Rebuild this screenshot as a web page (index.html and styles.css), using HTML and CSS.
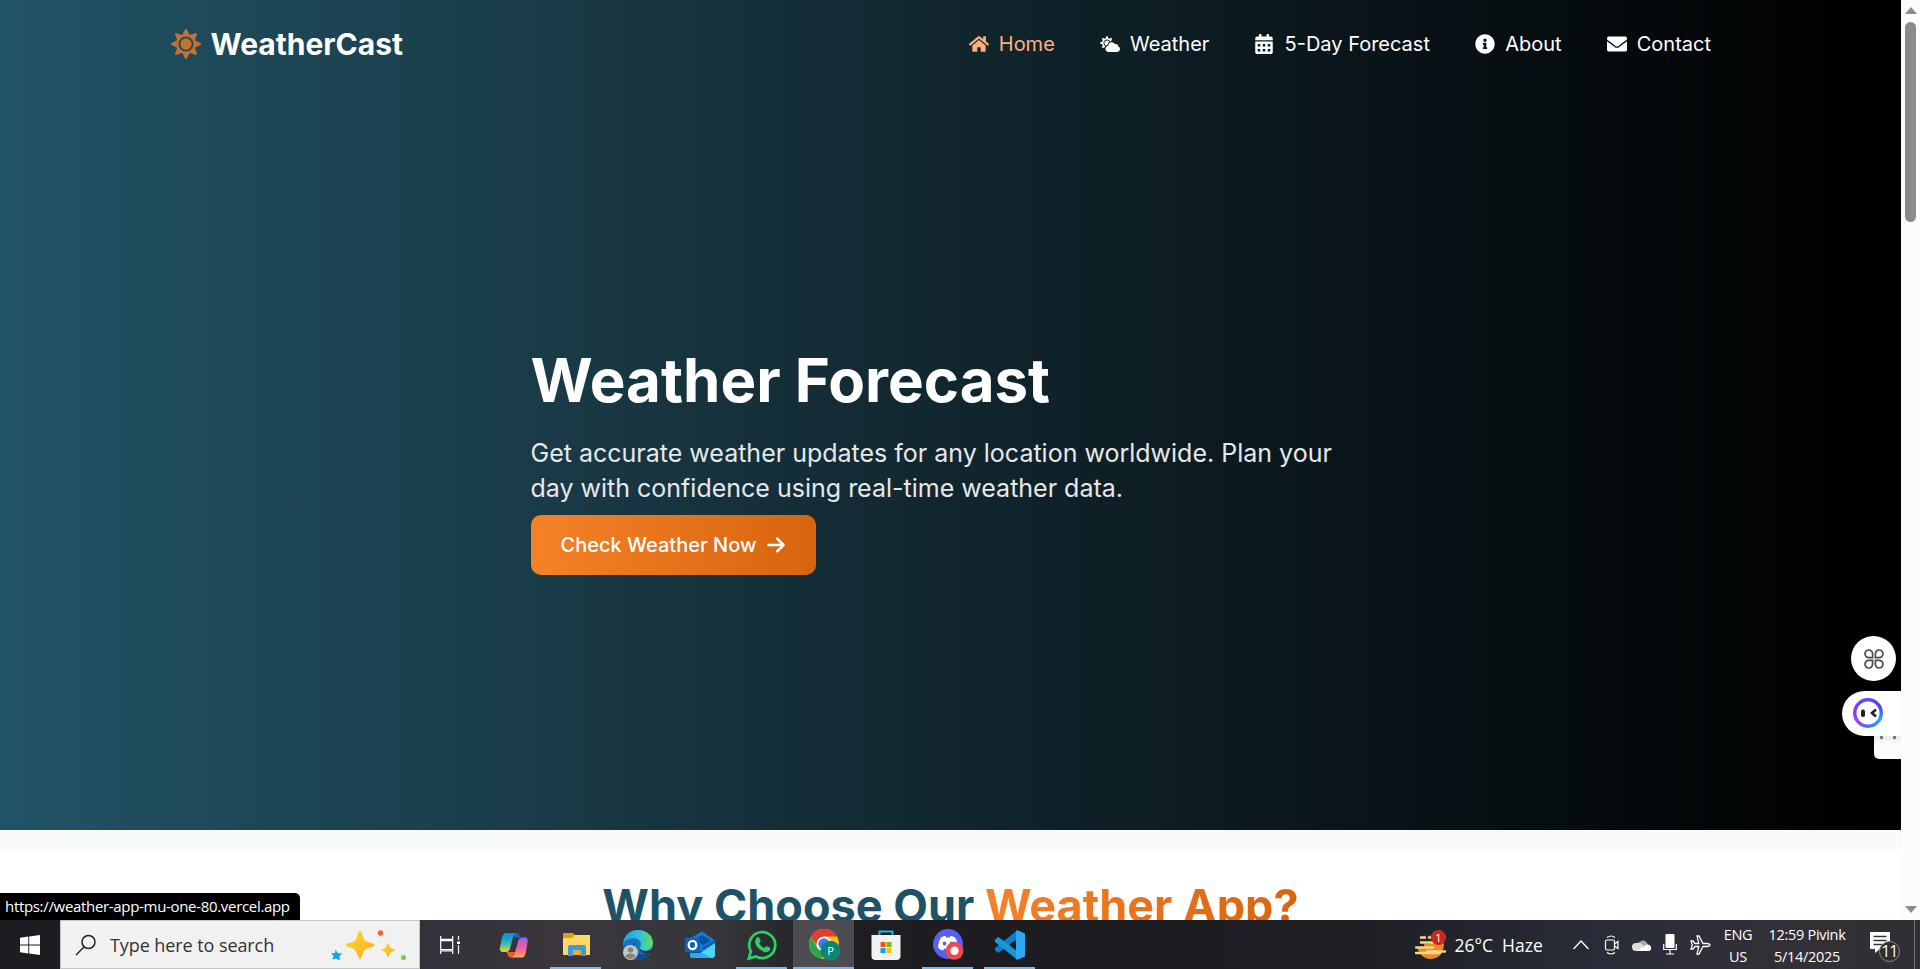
FILE: index.html
```html
<!DOCTYPE html>
<html lang="en">
<head>
<meta charset="utf-8">
<title>WeatherCast</title>
<link rel="stylesheet" href="styles.css">
</head>
<body>
<div class="desktop">
  <div class="browser">
    <div class="page">
      <section class="hero">
        <header class="navbar">
          <div class="logo">
            <svg class="logo-icon" viewBox="0 0 512 512"><path d="M256 160c-52.9 0-96 43.1-96 96s43.1 96 96 96 96-43.1 96-96-43.1-96-96-96zm246.4 80.5l-94.7-47.3 33.5-100.4c4.5-13.6-8.4-26.5-21.9-21.9l-100.4 33.5-47.4-94.8c-6.4-12.8-24.6-12.8-31 0l-47.3 94.7L92.7 70.8c-13.6-4.5-26.5 8.4-21.9 21.9l33.5 100.4-94.7 47.4c-12.8 6.4-12.8 24.6 0 31l94.7 47.3-33.5 100.5c-4.5 13.6 8.4 26.5 21.9 21.9l100.4-33.5 47.3 94.7c6.4 12.8 24.6 12.8 31 0l47.3-94.7 100.4 33.5c13.6 4.5 26.5-8.4 21.9-21.9l-33.5-100.4 94.7-47.3c13-6.5 13-24.7.2-31.1zm-155.9 106c-49.9 49.9-131.1 49.9-181 0-49.9-49.9-49.9-131.1 0-181 49.9-49.9 131.1-49.9 181 0 49.9 49.9 49.9 131.1 0 181z"/></svg>
            <span>WeatherCast</span>
          </div>
          <nav class="nav">
            <a class="nav-link active"><svg class="nav-icon" viewBox="0 0 576 512"><path d="M280.37 148.26L96 300.11V464a16 16 0 0 0 16 16l112.06-.29a16 16 0 0 0 15.92-16V368a16 16 0 0 1 16-16h64a16 16 0 0 1 16 16v95.64a16 16 0 0 0 16 16.05L464 480a16 16 0 0 0 16-16V300L295.67 148.26a12.19 12.19 0 0 0-15.3 0zM571.6 251.47L488 182.56V44.05a12 12 0 0 0-12-12h-56a12 12 0 0 0-12 12v72.61L318.47 43a48 48 0 0 0-61 0L4.34 251.47a12 12 0 0 0-1.6 16.9l25.5 31A12 12 0 0 0 45.15 301l235.22-193.74a12.19 12.19 0 0 1 15.3 0L530.9 301a12 12 0 0 0 16.9-1.6l25.5-31a12 12 0 0 0-1.7-16.93z"/></svg><span>Home</span></a>
            <a class="nav-link"><svg class="nav-icon" viewBox="0 0 640 512"><path d="M575.2 325.7c.2-1.9.8-3.7.8-5.6 0-35.3-28.7-64-64-64-12.6 0-24.2 3.8-34.1 10-17.6-38.8-56.5-66-101.9-66-61.8 0-112 50.1-112 112 0 3 .7 5.8.9 8.7-49.6 3.7-88.9 44.7-88.9 95.3 0 53 43 96 96 96h272c53 0 96-43 96-96 0-42.1-27.2-77.4-64.8-90.4zm-430.4-22.6c-43.7-43.7-43.7-114.7 0-158.3 43.7-43.7 114.7-43.7 158.4 0 9.7 9.7 16.9 20.9 22.3 32.7 9.8-3.7 20.1-6 30.7-7.5L386 81.1c4-11.9-7.3-23.1-19.2-19.2L279 91.2 237.5 8.4C232-2.8 216-2.8 210.4 8.4L169 91.2 81.1 61.9C69.3 58 58 69.3 61.9 81.1l29.3 87.8-82.8 41.5c-11.2 5.6-11.2 21.5 0 27.1l82.8 41.4-29.3 87.8c-4 11.9 7.3 23.1 19.2 19.2l76.1-25.3c6.1-12.4 14-23.7 23.6-33.5-13.1-5.4-25.4-13.4-36-24zm-4.8-79.2c0 40.8 29.3 74.8 67.9 82.3 8-4.7 16.3-8.8 25.2-11.7 5.4-44.3 31-82.5 67.4-105C287.3 160.4 258 140 224 140c-46.3 0-84 37.6-84 83.9z"/></svg><span>Weather</span></a>
            <a class="nav-link"><svg class="nav-icon" viewBox="0 0 448 512"><path fill-rule="evenodd" d="M0 192h448v272c0 26.5-21.5 48-48 48H48c-26.5 0-48-21.5-48-48zM64 256v64h64v-64zM192 256v64h64v-64zM320 256v64h64v-64zM64 384v64h64v-64zM192 384v64h64v-64zM320 384v64h64v-64zM400 64h-48V16c0-8.8-7.2-16-16-16h-32c-8.8 0-16 7.2-16 16v48H160V16c0-8.8-7.2-16-16-16h-32c-8.8 0-16 7.2-16 16v48H48C21.5 64 0 85.5 0 112v48h448v-48c0-26.5-21.5-48-48-48z"/></svg><span>5-Day Forecast</span></a>
            <a class="nav-link"><svg class="nav-icon" viewBox="0 0 512 512"><path d="M256 8C119.043 8 8 119.083 8 256c0 136.997 111.043 248 248 248s248-111.003 248-248C504 119.083 392.957 8 256 8zm0 110c23.196 0 42 18.804 42 42s-18.804 42-42 42-42-18.804-42-42 18.804-42 42-42zm56 254c0 6.627-5.373 12-12 12h-88c-6.627 0-12-5.373-12-12v-24c0-6.627 5.373-12 12-12h12v-64h-12c-6.627 0-12-5.373-12-12v-24c0-6.627 5.373-12 12-12h64c6.627 0 12 5.373 12 12v100h12c6.627 0 12 5.373 12 12v24z"/></svg><span>About</span></a>
            <a class="nav-link"><svg class="nav-icon" viewBox="0 0 512 512"><path d="M502.3 190.8c3.9-3.1 9.7-.2 9.7 4.7V400c0 26.5-21.5 48-48 48H48c-26.5 0-48-21.5-48-48V195.6c0-5 5.7-7.8 9.7-4.7 22.4 17.4 52.1 39.5 154.1 113.6 21.1 15.4 56.7 47.8 92.2 47.6 35.7.3 72-32.8 92.3-47.6 102-74.1 131.6-96.3 154-113.7zM256 320c23.2.4 56.6-29.2 73.4-41.4 132.7-96.3 142.8-104.7 173.4-128.7 5.8-4.5 9.2-11.5 9.2-18.9v-19c0-26.5-21.5-48-48-48H48c-26.5 0-48 21.5-48 48v19c0 7.4 3.4 14.3 9.2 18.9 30.6 23.9 40.7 32.4 173.4 128.7 16.8 12.2 50.2 41.8 73.4 41.4z"/></svg><span>Contact</span></a>
          </nav>
        </header>
        <div class="hero-content">
          <h1>Weather Forecast</h1>
          <p>Get accurate weather updates for any location worldwide. Plan your<br>day with confidence using real-time weather data.</p>
          <a class="cta"><span>Check Weather Now</span><svg class="cta-arrow" viewBox="0 0 448 512"><path d="M438.6 278.6c12.5-12.5 12.5-32.8 0-45.3l-160-160c-12.5-12.5-32.8-12.5-45.3 0s-12.5 32.8 0 45.3L338.8 224 32 224c-17.7 0-32 14.3-32 32s14.3 32 32 32l306.7 0L233.4 393.4c-12.5 12.5-12.5 32.8 0 45.3s32.8 12.5 45.3 0l160-160z"/></svg></a>
        </div>
      </section>
      <section class="features">
        <h2>Why Choose Our <span class="accent">Weather App?</span></h2>
      </section>
      <div class="widget-tab"><i></i><i></i></div>
      <div class="widget-apps">
        <svg viewBox="0 0 20 20" width="20" height="20" fill="none" stroke="#4b4c52" stroke-width="1.7"><path d="M8.6 8.6H4.9A3.8 3.8 0 1 1 8.6 4.9zM11.4 8.6V4.9A3.8 3.8 0 1 1 15.1 8.6zM8.6 11.4V15.1A3.8 3.8 0 1 1 4.9 11.4zM11.4 11.4H15.1A3.8 3.8 0 1 1 11.4 15.1z"/></svg>
      </div>
      <div class="widget-bot">
        <span class="bot-ring"><svg viewBox="0 0 24 24" width="24" height="24"><rect x="5" y="8.500" width="4" height="7.500" rx="1.800" fill="#222"/><path d="M20 8.500l-4 3.500 4 3.500" fill="none" stroke="#222" stroke-width="2.600"/></svg></span>
      </div>
      <div class="status">https://weather-app-mu-one-80.vercel.app</div>
    </div>
    <div class="scrollbar"><i class="up"></i><i class="thumb"></i><i class="down"></i></div>
  </div>

  <footer class="taskbar">
    <div class="start"><svg width="20" height="20" viewBox="0 0 20 20" fill="#fff"><path d="M0 2.800L8.300 1.600V9.500H0zM9.200 1.400L20 0V9.500H9.200zM0 10.500H8.300V18.400L0 17.200zM9.200 10.500H20V20L9.200 18.600z"/></svg></div>
    <div class="search">
      <svg width="22" height="22" viewBox="0 0 22 22" fill="none" stroke="#222" stroke-width="1.500"><circle cx="13.500" cy="8" r="6.500"/><path d="M9 13L1 21"/></svg>
      <span>Type here to search</span>
      <svg class="sparkles" width="78" height="32" viewBox="0 0 78 32">
        <defs><linearGradient id="gold" x1="0" y1="0" x2="1" y2="1"><stop offset="0" stop-color="#ffdc3c"/><stop offset="1" stop-color="#f6ac16"/></linearGradient></defs>
        <path fill="url(#gold)" d="M30 1.500c2 0 3 9 5.500 10.500s9 2 9 4-7 3-9.500 4.700S32 30 30 30s-3-7.700-5.500-9.600S15.500 18 15.500 16s7-2.500 9.300-4.200S28 1.500 30 1.500z"/>
        <path fill="url(#gold)" d="M58 14c1.200 0 1.600 4.200 2.700 5s4.300 1 4.300 2-3.300 1.500-4.300 2.300S59.200 28 58 28s-1.500-4-2.700-4.800S51.500 22 51.500 21s2.700-1.200 3.800-2S57 14 58 14z"/>
        <path fill="#08a8f4" d="M5.500 20.500l2.500 4 4-.5-2.500 3.500.5 4L6 29.500l-4 1 1.700-3.500L1 24l4 .3z"/><circle cx="50.500" cy="4" r="2.700" fill="#f4622a"/><circle cx="73.500" cy="28.500" r="2.600" fill="#84ca3e"/>
      </svg>
    </div>
    <div class="tasks">
      <div class="task task-view"><svg width="20" height="20" viewBox="0 0 20 20" fill="none" stroke="#fff" stroke-width="1.200"><path d="M.7 1v3.400h12V1M.7 19v-3h12v3M.7 5.600h12v9H.7zM18.500 1v4M18.500 10v9"/><path fill="#fff" stroke="none" d="M17 6.500h3V9h-3z"/></svg></div>
      <div class="task"><svg width="30" height="30" viewBox="0 0 30 30">
        <defs><linearGradient id="cpA" x1="0" y1="0" x2="0" y2="1"><stop offset="0" stop-color="#0f86e8"/><stop offset=".5" stop-color="#26b7b8"/><stop offset="1" stop-color="#f3d42a"/></linearGradient><linearGradient id="cpB" x1="0" y1="0" x2="0" y2="1"><stop offset="0" stop-color="#a25bea"/><stop offset=".55" stop-color="#ef5f9b"/><stop offset="1" stop-color="#ffad55"/></linearGradient></defs>
        <path fill="#1a5ed2" d="M13 3h4.500c2.400 0 3 1.500 3.800 4.500H16z"/><path fill="url(#cpA)" d="M7 3h10c-2 1-2.500 3-3.400 6L11 18.500c-.8 2.800-2 3.500-4 3.500H4c-3 0-3.500-2-3-5L3 7.500C4 4.500 5 3 7 3z"/><path fill="#f4592d" d="M7 22h9l-1.500 5.500H12c-3.400 0-3-4-5-5.500z"/><path fill="url(#cpB)" d="M23 27.500H12.500c2.500-.5 3-3 3.800-6L19 11.500c.9-3 2-4 4-4h2.500c3 0 3.500 2 3 5L27 22c-1 4-2 5.500-4 5.500z"/></svg></div>
      <div class="task open"><svg width="30" height="30" viewBox="0 0 30 30"><path fill="#dba010" d="M2 3h10l3 3v4H2z"/><path fill="#ffd866" d="M2 8h9l3-3h15v20H2z"/><path fill="#3c9be0" d="M7 26V17q0-2 2-2h14q2 0 2 2v9h-5v-5q0-1-1-1h-6q-1 0-1 1v5z"/><path fill="#e8ad2d" d="M12 20h8v5h-8z"/></svg></div>
      <div class="task"><svg width="32" height="32" viewBox="0 0 32 32">
        <defs><linearGradient id="edA"><stop offset="0" stop-color="#219bea"/><stop offset=".55" stop-color="#35c1db"/><stop offset="1" stop-color="#69db4e"/></linearGradient></defs>
        <circle cx="16" cy="16" r="15" fill="#1673bf"/><path fill="url(#edA)" d="M1 15C2 6 8 1 16 1c9 0 15 6 15 13 0 5-4 7.500-8 7.500-4 0-6-1.500-5-3 2-3 1-8-4-9C8 8.500 3 11 1 15z"/><path fill="#0d4b93" d="M13 13c-3 8 3 15 15 11-3 5-8 7-13 7-7-3-8-13-2-18z"/><path fill="#333238" d="M17.500 19c1 3.500 9 4.500 13.500 1l1 3-3.500 1c-5 1.500-11 0-11-5z"/><circle cx="8.500" cy="23.500" r="7.500" fill="#c8c8c8"/><circle cx="8.500" cy="21" r="2.800" fill="#858585"/><path fill="#858585" d="M3.500 28q0-3.500 5-3.500t5 3.500q-5 4-10 0z"/></svg></div>
      <div class="task"><svg width="32" height="32" viewBox="0 0 32 32"><path fill="#1680d4" d="M5 10L18 2.500l13 9V22H5z"/><path fill="#0a4fa2" d="M12 9.500l6-3.500 9 5.500-8 5z"/><path fill="#0c5cb8" d="M17 19l14-8v4l-10 7z"/><path fill="#49d6fc" d="M31 14v12q0 3-3 3H9q-3 0-3-3v-2h10z"/><path fill="#2dadf0" d="M6 24h12l9 5H9q-3 0-3-3z"/><rect x="1" y="8.500" width="15" height="15" rx="1" fill="#0c63b8"/><ellipse cx="8.500" cy="16" rx="3.800" ry="4.200" fill="none" stroke="#fff" stroke-width="2.300"/></svg></div>
      <div class="task open"><svg width="32" height="32" viewBox="0 0 32 32" fill="none" stroke="#27d366" stroke-width="2.700"><path d="M2.800 29.500l2-7.200A13 13 0 1 1 10 27.500z"/><path fill="#27d366" stroke="none" d="M11 8.500c1-.8 2-.5 2.400.4l1.200 2.900c.3 1-1.500 2-1.200 2.700 1 2 2.700 3.500 4.700 4.300.8.200 1.800-2 2.700-1.600l3 1.400c1 .6.500 2.600-.5 3.500-2.500 2.200-6.500.6-9-1.300-2.600-2-5-5-5.200-7.900 0-1.900.8-3.500 1.900-4.400z"/></svg></div>
      <div class="task open current"><svg width="32" height="33" viewBox="0 0 32 33"><circle cx="16" cy="16" r="15" fill="#fbc116"/><path fill="#e33b2e" d="M3 8.500A15 15 0 0 1 29 8.500H16L10 19z"/><path fill="#2da44e" d="M3 8.500L9.500 20 16 24l-3 6.700A15 15 0 0 1 3 8.500z"/><circle cx="16" cy="16" r="7.500" fill="#fff"/><circle cx="16" cy="16" r="5.700" fill="#3c7ded"/><circle cx="22.500" cy="22.800" r="10" fill="#0c8577"/><text x="22.500" y="27" text-anchor="middle" class="badge-text">P</text></svg></div>
      <div class="task"><svg width="30" height="32" viewBox="0 0 30 32"><path d="M8.500 8V2.500h13V8" fill="none" stroke="#22b3ea" stroke-width="2"/><path fill="#f2f2f2" d="M.5 6h29v21q0 4-4 4h-21q-4 0-4-4z"/><path fill="#f25022" d="M9.500 13h5v5h-5z"/><path fill="#7fba00" d="M15.500 13h5v5h-5z"/><path fill="#00a4ef" d="M9.500 19h5v5h-5z"/><path fill="#ffb900" d="M15.500 19h5v5h-5z"/></svg></div>
      <div class="task open"><svg width="32" height="33" viewBox="0 0 32 33"><circle cx="16" cy="16" r="15" fill="#5661f1"/><path fill="#fff" d="M9 9.500c2-1.200 3.500-1.400 4.500-1.500l.8 1.400h3.400l.8-1.400c1.500.1 3 .5 4.500 1.500 2 3 3.200 6.500 2.800 10.500-1.500 1.300-3 2-4.800 2.400l-1.200-2q-3.800 1-7.600 0l-1.200 2C9 22 7.600 21.300 6.200 20 6 16 7 12.500 9 9.500z"/><ellipse cx="12.500" cy="15.500" rx="1.800" ry="2" fill="#5661f1"/><ellipse cx="19.500" cy="15.500" rx="1.800" ry="2" fill="#5661f1"/><circle cx="22.500" cy="22.800" r="9" fill="#ea4b50"/><circle cx="22.500" cy="22.800" r="4.200" fill="#fff"/></svg></div>
      <div class="task open"><svg width="32" height="32" viewBox="0 0 32 32"><path fill="#127dc2" d="M23 1.500l.5 8L4.500 24 1 21.500V19z"/><path fill="#1697de" d="M1 10.500L4.500 8l19 14.500-.5 8L1 13z"/><path fill="#29aaf2" d="M23 1l8 3.500v23L23 31l-1-1.500V2.500z"/></svg></div>
    </div>
    <div class="tray">
      <div class="weather-tray">
        <svg width="34" height="32" viewBox="0 0 34 32"><path fill="#ee8a21" d="M2 18h26c0 7-5 12-13 12-6 0-11-5-13-12z"/><circle cx="19" cy="16" r="10" fill="#ee8a21"/><path fill="#26272c" d="M4 5h10l4 7-3 3H4z"/><path d="M6 8.500h4M14 8.500h6M6 13.500h12M1 18.500h17M12 22.500h18M1 24h24" stroke="#f8d78a" stroke-width="2.400" stroke-linecap="round"/><circle cx="23.500" cy="8.500" r="7.600" fill="#c42b1c"/><text x="23.500" y="12.500" text-anchor="middle" class="badge-text">1</text></svg>
        <span>26°C&nbsp; Haze</span>
      </div>
      <svg class="t-up" width="16" height="10" viewBox="0 0 16 10" fill="none" stroke="#fff" stroke-width="1.300"><path d="M.5 9L8 1l7.500 8"/></svg>
      <svg class="t-cam" width="16" height="20" viewBox="0 0 16 20" fill="none" stroke="#fff" stroke-width="1.200"><rect x="1.500" y="5" width="9" height="10" rx="1.500"/><path d="M10.500 9l3.500-2.500v7L10.500 11M3 2.500q4-3 8 0M3 17.500q4 3 8 0"/></svg>
      <svg class="t-cloud" width="21" height="14" viewBox="0 0 21 14"><path fill="#aaa" d="M6 6a5 5 0 0 1 9-1l2 3-7 3z"/><path fill="#ddd" d="M4 13a4 4 0 0 1 0-8q3-1 6 1l4 7z"/><path fill="#fff" d="M5 13l9-6q2-1 3.500 0a3.500 3.500 0 0 1 0 6z"/></svg>
      <svg class="t-mic" width="14" height="21" viewBox="0 0 14 21"><rect x="2.500" y="0" width="9" height="14" rx="1" fill="#fff"/><path d="M.7 10v5.500h12.600V10M7 15.500v4M3 20h8" fill="none" stroke="#fff" stroke-width="1.200"/></svg>
      <svg class="t-plane" width="21" height="20" viewBox="0 0 21 20" fill="none" stroke="#fff" stroke-width="1.300"><path d="M20 10q-.5-1.500-3-1.500h-4L9 1H7l1.800 7.500H5L3 6H1l1.300 4L1 14h2l2-2.500h3.800L7 19h2l4-7.500h4q2.500 0 3-1.500z"/></svg>
      <div class="lang"><span>ENG</span><span>US</span></div>
      <div class="clock"><span>12:59 Pivink</span><span>5/14/2025</span></div>
      <svg class="t-note" width="32" height="34" viewBox="0 0 32 34"><path fill="#fff" d="M1 1h20v17H11l-5 4v-4H1z"/><path d="M4.500 5.500h13M4.500 9.500h13M4.500 13.500h9" stroke="#333" stroke-width="1.300"/><circle cx="20.500" cy="20.500" r="10" fill="#2f2e33" stroke="#8a898c"/><text x="20.300" y="25.500" text-anchor="middle" class="count-text">11</text></svg>
      <div class="peek"></div>
    </div>
  </footer>
</div>
</body>
</html>
```
FILE: styles.css
```css
* { box-sizing: border-box; }
body { margin: 0; font-family: Inter, sans-serif; }
svg { display: block; flex: none; }
.desktop { display: flex; flex-direction: column; width: 1920px; height: 969px; overflow: hidden; }
.browser { display: flex; height: 920px; overflow: hidden; }
.page { position: relative; width: 1901px; background: #fff; overflow: hidden; }
.hero { height: 830px; background: linear-gradient(to right, #215366 0%, #1a3c49 27%, #11262e 50%, #000 98%); }
.navbar { display: flex; justify-content: space-between; align-items: center; height: 88px; padding: 0 190px 0 171px; color: #fff; }
.logo { display: flex; align-items: center; gap: 9.500px; font-size: 30px; font-weight: 700; }
.logo-icon { width: 30px; height: 30px; fill: #c27233; }
.nav { display: flex; gap: 45px; }
.nav-link { display: flex; align-items: center; gap: 10.200px; font-size: 20px; }
.nav-icon { width: 20px; height: 20px; fill: currentColor; }
.active { color: #ffb07c; }
.hero-content { padding: 256px 0 0 530.500px; }
h1 { margin: 0 0 20px; font-size: 60px; line-height: 72px; font-weight: 700; color: #fff; white-space: nowrap; }
.hero-content p { margin: 0 0 9px; font-size: 25px; line-height: 35px; color: #e6e8ea; white-space: nowrap; }
.cta { display: inline-flex; align-items: center; gap: 9px; width: 285px; height: 60px; padding: 0 30px; border-radius: 10px; background: linear-gradient(to right, #f58229, #d8640d); color: #fff; font-size: 20px; font-weight: 500; white-space: nowrap; }
.cta-arrow { width: 20px; height: 20px; fill: #fff; }
.features { border-top: 20px solid #f9fafc; padding-top: 26px; }
h2 { margin: 0; text-align: center; font-size: 45px; line-height: 60px; font-weight: 700; color: #205266; white-space: nowrap; }
.accent { background: linear-gradient(to right, #f58229, #d8640d); background-clip: text; -webkit-background-clip: text; color: transparent; }

.widget-apps { position: absolute; left: 1851px; top: 636px; width: 45px; height: 45px; border-radius: 50%; background: #fff; display: grid; place-items: center; }
.widget-bot { position: absolute; left: 1842px; top: 691px; width: 59px; height: 45px; border-radius: 23px 0 0 23px; background: #fff; padding: 7px 0 0 11px; }
.bot-ring { display: grid; place-items: center; width: 30px; height: 30px; border-radius: 50%; background: radial-gradient(circle, #fff 0 11px, transparent 12px), conic-gradient(#5a50f8, #4b3df5, #27a8f0, #4a6df8, #a13ff2, #6a45f6, #5a50f8); }
.widget-tab { position: absolute; left: 1874px; top: 730px; width: 27px; height: 29px; border-radius: 0 0 0 5px; background: linear-gradient(#dcdcdc, #fcfcfc 50%); display: flex; gap: 10px; padding: 6px 0 0 6px; }
.widget-tab i { width: 3px; height: 3px; background: #777; }
.status { position: absolute; left: 0; bottom: 0; width: 300px; height: 27px; padding-left: 5px; border-radius: 0 5px 0 0; background: #000; color: #fff; font: 15px/26px "Open Sans", sans-serif; letter-spacing: -.32px; white-space: nowrap; }

.scrollbar { width: 19px; background: #fcfcfc; display: flex; flex-direction: column; align-items: center; padding: 7px 0 7px; }
.up, .down { border: 6.500px solid transparent; }
.up { border-top: 0; border-bottom: 7px solid #8b8b8b; }
.down { margin-top: auto; border-bottom: 0; border-top: 7px solid #8b8b8b; }
.thumb { width: 11px; height: 200px; margin-top: 8px; border-radius: 6px; background: #8b8b8b; }

.taskbar { display: flex; height: 49px; background: linear-gradient(to right, #1c1c21 0, #1c1c21 60px, #35313a 430px, #3a363c 560px, #36373b 720px, #1e1e22 830px, #1b1b20 1150px, #202126 1400px, #292c38 1600px, #2d2e38 1680px, #333036 1800px, #302d33 1920px); color: #fff; font-family: "Open Sans", sans-serif; }
.start { width: 60px; display: grid; place-items: center; }
.search { display: flex; align-items: center; width: 360px; padding: 0 11px 0 14px; background: #f1f1f1; border: 1px solid #c5c5c5; color: #333; font-size: 18px; }
.search span { margin-left: 13px; letter-spacing: -.08px; white-space: nowrap; }
.sparkles { margin-left: auto; }
.tasks { display: flex; width: 620px; }
.task { display: grid; flex: none; place-items: center; width: 51px; margin-right: 11px; border-bottom: 2px solid transparent; padding-top: 2px; }
.task-view { width: 60px; margin-right: 8px; }
.task.open { border-bottom-color: #76b9ed; }
.task.current { width: 61px; margin: 0 6px 0 -5px; background: #4d4c50; }
.badge-text { font-size: 11px; fill: #fff; }
.count-text { font-size: 16px; letter-spacing: -1px; fill: #fff; }
.tray { display: flex; align-items: center; margin-left: auto; font-size: 15px; }
.weather-tray { display: flex; align-items: center; font-size: 17.500px; white-space: nowrap; width: 158px; gap: 6px; }
.t-up { margin-right: 15px; }
.t-cam { margin-right: 12px; }
.t-cloud { margin-right: 10.500px; }
.t-mic { margin-right: 13px; }
.t-plane { margin-right: 11px; }
.lang, .clock { display: flex; flex-direction: column; align-items: center; line-height: 22px; font-size: 14.500px; padding-top: 2px; white-space: nowrap; letter-spacing: -.3px; }
.lang { width: 32px; }
.clock { width: 80px; margin: 0 22px 0 13px; }
.t-note { margin: 6px 13px 0 0; }
.peek { width: 6px; height: 49px; border-left: 1px solid #77767a; }
```
